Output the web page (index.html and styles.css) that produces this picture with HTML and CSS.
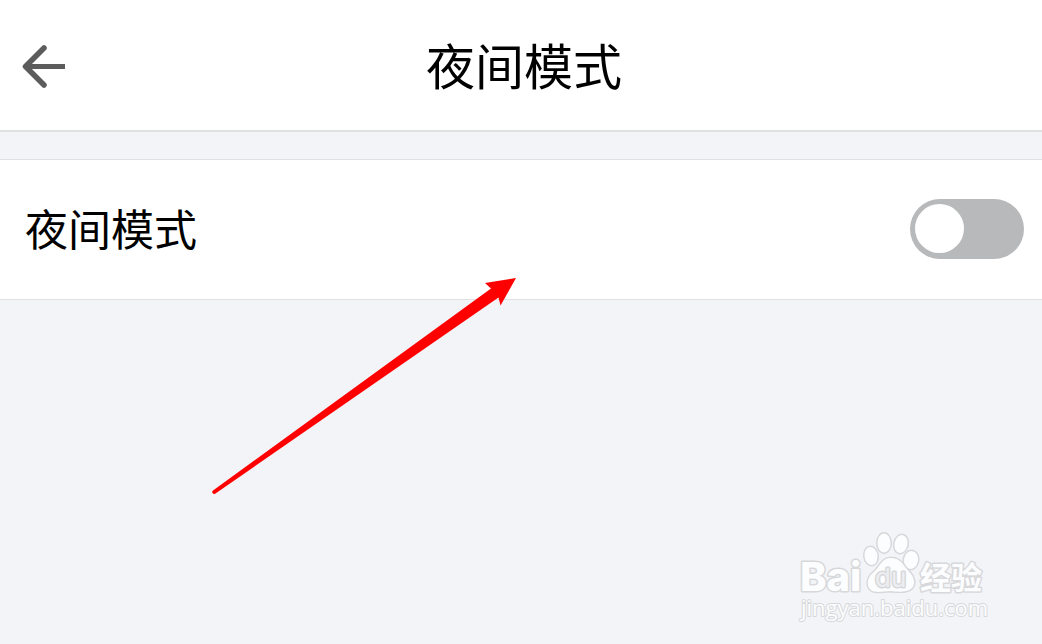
FILE: index.html
```html
<!DOCTYPE html>
<html lang="zh-CN">
<head>
<meta charset="utf-8">
<meta name="viewport" content="width=device-width, initial-scale=1">
<title>夜间模式</title>
<link rel="stylesheet" href="styles.css">
</head>
<body>
<header class="topbar">
  <button class="back" type="button" aria-label="返回">
    <svg width="44" height="44" viewBox="0 0 44 44" fill="none" stroke="#5c5c5c" aria-hidden="true">
      <path d="M22 4 3.500 22.500 22 41" stroke-width="5.500" stroke-linecap="round" stroke-linejoin="round"/>
      <path d="M3 22.500H43" stroke-width="5"/>
    </svg>
  </button>
  <h1 class="title">夜间模式</h1>
</header>
<main class="settings">
  <div class="row">
    <label class="row-label" for="night">夜间模式</label>
    <input class="switch" id="night" type="checkbox" role="switch">
  </div>
</main>
<svg class="pointer" width="306" height="218" viewBox="0 0 306 218" aria-hidden="true">
  <path d="M304 1 273 6 279 11.500 1 213.500A1.700 1.700 0 0 0 3.500 216.500L286.500 20.500 288.500 28.500Z" fill="#f00"/>
</svg>
<svg class="watermark" width="196" height="96" viewBox="0 0 196 96" role="img" aria-label="Baidu 经验">
  <g class="mark">
    <ellipse cx="75" cy="27" rx="6.500" ry="9" transform="rotate(-8 75 27)"/>
    <ellipse cx="88" cy="14" rx="6.500" ry="9.500"/>
    <ellipse cx="105" cy="15" rx="6.500" ry="9" transform="rotate(12 105 15)"/>
    <ellipse cx="115" cy="31" rx="7" ry="9" transform="rotate(10 115 31)"/>
    <path d="M95 29C86 29 84 37 79 42C74 46 71 50 72 56C74 65 83 63 94 62C105 63 116 64 118 55C119 47 113 43 109 38C106 33 102 29 95 29Z"/>
    <text class="brand" x="4" y="62">Bai</text>
    <text class="du" x="79" y="58">du</text>
    <text class="han" x="124" y="60">经验</text>
    <text class="site" x="5" y="87">jingyan.baidu.com</text>
  </g>
</svg>
</body>
</html>
```
FILE: styles.css
```css
* { box-sizing: border-box; }
body {
  position: relative;
  min-height: 100vh;
  margin: 0;
  background: #f2f4f8;
  color: #000;
  font-family: "Noto Sans CJK SC", sans-serif;
}
.topbar {
  display: grid;
  grid-template-columns: 88px 1fr 88px;
  align-items: center;
  height: 132px;
  padding: 2px 4px 0 10px;
  background: #fff;
  border-bottom: 2px solid #dfe0e0;
}
.back {
  display: flex;
  width: 68px;
  padding: 12px;
  border: 0;
  background: none;
}
.title {
  margin: 0;
  padding-bottom: 4px;
  font-size: 49px;
  font-weight: 400;
  line-height: 72px;
  text-align: center;
}
.settings { padding-top: 27px; }
.row {
  display: flex;
  align-items: center;
  justify-content: space-between;
  min-height: 141px;
  padding: 0 18px 2px 25px;
  background: #fff;
  border: solid #dfe0e0;
  border-width: 1px 0;
}
.row-label { padding-bottom: 4px; font-size: 43px; line-height: 64px; }
.switch {
  display: flex;
  align-items: center;
  appearance: none;
  width: 114px;
  height: 60px;
  margin: 0;
  padding: 5px;
  border-radius: 30px;
  background: #b8b9bb;
}
.switch::before {
  content: "";
  width: 49px;
  height: 49px;
  border-radius: 50%;
  background: #fff;
}
.switch:checked { justify-content: flex-end; background: #4e8cff; }
.pointer {
  position: absolute;
  top: 277px;
  left: 212px;
  pointer-events: none;
}
.watermark {
  position: absolute;
  right: 50px;
  bottom: 19px;
  pointer-events: none;
}
.mark {
  fill: #fcfdfe;
  stroke: #d8d8da;
  stroke-width: 3px;
  stroke-linejoin: round;
  paint-order: stroke;
}
.brand { font: 800 40px Inter, sans-serif; }
.du { font: 400 26px Inter, sans-serif; fill: #eceef1; }
.han { font: 700 31px "Noto Sans CJK SC", sans-serif; }
.site { font: 400 22px "Open Sans", sans-serif; stroke-width: 2px; }
```
